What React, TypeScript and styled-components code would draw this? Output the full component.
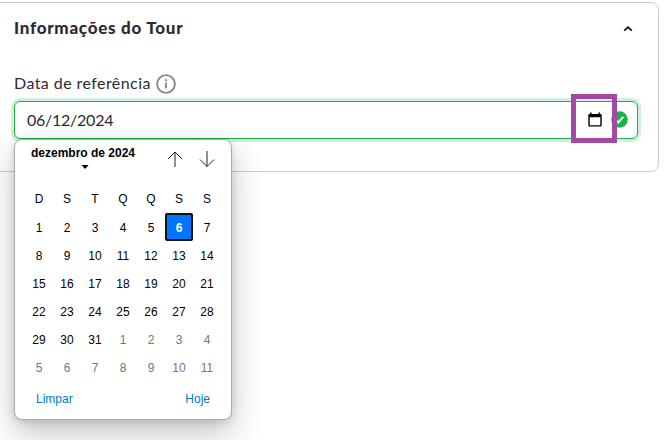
import React from "react";
import styled, { createGlobalStyle } from "styled-components";

const GlobalStyle = createGlobalStyle`
  * { box-sizing: border-box; }
  html, body { margin: 0; background: #fff; overflow: hidden; }
  body { font-family: Lato, "Open Sans", sans-serif; color: #2b2b33; }
  svg { display: block; flex: none; }
`;

const Page = styled.main`
  width: 666px;
  height: 440px;
  padding-top: 2px;
  overflow: hidden;
`;

const Card = styled.section`
  width: 669px;
  height: 170px;
  margin-left: -10px;
  padding: 0 20px 0 23px;
  border: 1px solid #cdc9df;
  border-radius: 8px;
`;

const CardHeader = styled.header`
  display: flex;
  align-items: center;
  justify-content: space-between;
  height: 52px;
  padding-right: 4px;
`;

const Title = styled.h2`
  margin: 0;
  padding-bottom: 2px;
  font-size: 17px;
  line-height: 20px;
  font-weight: 900;
  letter-spacing: 0.73px;
`;

const Label = styled.label`
  display: flex;
  align-items: center;
  gap: 5px;
  height: 22px;
  margin-top: 18px;
  font-size: 16px;
  letter-spacing: 0.43px;
  white-space: nowrap;
`;

const LabelText = styled.span`
  padding-bottom: 4px;
`;

const Field = styled.div`
  position: relative;
  display: flex;
  align-items: center;
  justify-content: space-between;
  height: 38px;
  width: 624px;
  margin-top: 6px;
  padding: 0 9px 0 12px;
  border: 1px solid #16b447;
  border-radius: 6px;
  background: #fff;
  box-shadow: 0 0 0 3px #d0f0da;
`;

const DateValue = styled.span`
  padding-bottom: 2px;
  font-size: 16px;
  letter-spacing: -0.25px;
`;

const FieldIcons = styled.div`
  display: flex;
  align-items: center;
  gap: 9px;
  padding-bottom: 1px;
`;

const Highlight = styled.div`
  position: absolute;
  top: -8px;
  right: 20px;
  width: 46px;
  height: 49px;
  border: 5px solid #a349a4;
`;

const Popup = styled.div`
  position: absolute;
  top: 37px;
  left: -1px;
  z-index: 2;
  width: 218px;
  height: 281px;
  padding: 0 10px;
  border: 1px solid #aaa;
  border-radius: 8px;
  background: #fff;
  box-shadow: 0 13px 32px rgba(0, 0, 0, 0.24), 0 2px 7px rgba(0, 0, 0, 0.13);
  font-family: "Liberation Sans", Arial, sans-serif;
  font-size: 12px;
  color: #000;
`;

const MonthBar = styled.div`
  display: flex;
  justify-content: space-between;
  height: 45px;
  padding: 6px 6px 0;
`;

const Month = styled.div`
  display: flex;
  flex-direction: column;
  align-items: center;
  gap: 5px;
  font-weight: 700;
  line-height: 14px;
`;

const Caret = styled.svg`
  margin-left: 3px;
`;

const Arrows = styled.div`
  display: flex;
  gap: 16px;
  padding-top: 5px;
`;

const Grid = styled.div`
  display: grid;
  grid-template-columns: repeat(7, 28px);
  grid-template-rows: 28px;
  grid-auto-rows: 28px;
`;

const Weekday = styled.div`
  display: flex;
  align-items: center;
  justify-content: center;
`;

const Day = styled.div<{ $muted?: boolean; $selected?: boolean }>`
  display: flex;
  align-items: center;
  justify-content: center;
  padding-top: 2px;
  color: ${(p) => (p.$selected ? "#fff" : p.$muted ? "#767676" : "#000")};
  font-weight: ${(p) => (p.$selected ? 700 : 400)};
  background: ${(p) => (p.$selected ? "#0075ff" : "transparent")};
  border: ${(p) => (p.$selected ? "2px solid #101010" : "0")};
  border-radius: 2px;
`;

const Actions = styled.div`
  display: flex;
  justify-content: space-between;
  padding: 11px 11px 0 11px;
  line-height: 14px;
  color: #0078d4;
`;

const WEEKDAYS = ["D", "S", "T", "Q", "Q", "S", "S"];
const DAYS = Array.from({ length: 42 }, (_, i) => ({
  day: i < 31 ? i + 1 : i - 30,
  muted: i >= 31,
}));

const ArrowIcon = ({ down = false }: { down?: boolean }) => (
  <svg width="16" height="17" viewBox="0 0 16 17" fill="none" stroke="#222" strokeWidth="1">
    {down ? <path d="M8 0V15.500M1 8.500l7 7 7-7" /> : <path d="M8 16V1M1 8l7-7 7 7" />}
  </svg>
);

export default function App() {
  return (
    <>
      <GlobalStyle />
      <Page>
        <Card>
          <CardHeader>
            <Title>Informações do Tour</Title>
            <svg width="12" height="8" viewBox="0 0 12 8" fill="none" stroke="#111" strokeWidth="1.8">
              <path d="M2.200 5.700 6 2.200 9.800 5.700" />
            </svg>
          </CardHeader>
          <Label>
            <LabelText>Data de referência</LabelText>
            <svg width="20" height="20" viewBox="0 0 20 20" fill="none" stroke="#8a8a8a">
              <circle cx="10" cy="10" r="8.900" strokeWidth="1.9" />
              <path d="M10 8.500V14.500M10 5.300V7" strokeWidth="1.9" />
            </svg>
          </Label>
          <Field>
            <DateValue>06/12/2024</DateValue>
            <FieldIcons>
              <svg width="14" height="15" viewBox="0 0 14 15">
                <path
                  fill="#000"
                  fillRule="evenodd"
                  d="M2 .5h1.500V2h7V.5H12V2h.4A1.300 1.300 0 0 1 13.700 3.300v9.900a1.300 1.300 0 0 1-1.300 1.300H1.600A1.300 1.300 0 0 1 .3 13.200V3.300A1.300 1.300 0 0 1 1.600 2H2ZM1.700 5.200v8h10.600v-8Z"
                />
              </svg>
              <svg width="17" height="17" viewBox="0 0 17 17">
                <circle cx="8.500" cy="8.500" r="8.300" fill="#16b447" />
                <path d="m4.600 8.900 2.700 2.600 4.800-5.700" fill="none" stroke="#fff" strokeWidth="1.900" />
              </svg>
            </FieldIcons>
            <Highlight />
            <Popup>
              <MonthBar>
                <Month>
                  dezembro de 2024
                  <Caret width="8" height="4" viewBox="0 0 8 4">
                    <path d="M.5 0h7L4 4Z" />
                  </Caret>
                </Month>
                <Arrows>
                  <ArrowIcon />
                  <ArrowIcon down />
                </Arrows>
              </MonthBar>
              <Grid>
                {WEEKDAYS.map((d, i) => (
                  <Weekday key={i}>{d}</Weekday>
                ))}
                {DAYS.map(({ day, muted }, i) => (
                  <Day key={i} $muted={muted} $selected={i === 5}>
                    {day}
                  </Day>
                ))}
              </Grid>
              <Actions>
                <span>Limpar</span>
                <span>Hoje</span>
              </Actions>
            </Popup>
          </Field>
        </Card>
      </Page>
    </>
  );
}
